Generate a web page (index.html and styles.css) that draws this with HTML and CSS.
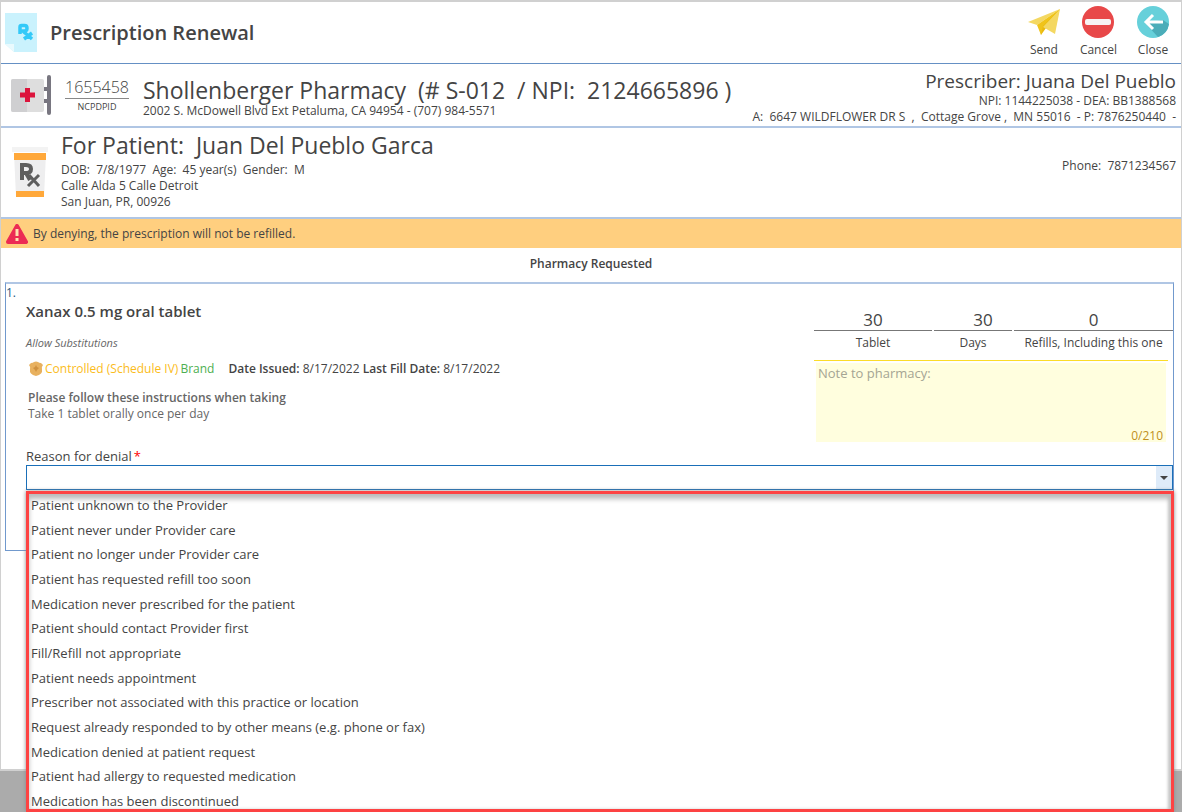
FILE: index.html
```html
<!DOCTYPE html>
<html lang="en">
<head>
    <meta charset="UTF-8">
    <title>Prescription Renewal</title>
    <link rel="stylesheet" href="styles.css">
</head>
<body>
    <div class="window">
        <header class="title-bar">
            <svg class="title-icon" width="32" height="39" viewBox="0 0 32 39">
                <path d="M0 0H32V39H9L0 31Z" fill="#caf2fd"/>
                <path d="M0 31H9V39Z" fill="#e9fafe"/>
                <path d="M15 21V14Q15 12.500 16.500 12.500H19.500Q22 12.500 22 15.200T19.500 18H15M18 18L20 20M19 19L27 26M27 20L19 26" fill="none" stroke="#33c9f8" stroke-width="3.500"/>
            </svg>
            <h1>Prescription Renewal</h1>
            <div class="actions">
                <button type="button">
                    <svg width="32" height="32" viewBox="0 0 32 32">
                        <path d="M0 16L32 3L9 19Z" fill="#f4d862"/>
                        <path d="M32 3L12 20L13 29L18 22Z" fill="#e9b90f"/>
                        <path d="M32 3L15 21L27 28Z" fill="#f4d862"/>
                        <path d="M32 3L9 19L13 29L15 20Z" fill="#f0c419"/>
                    </svg>
                    Send
                </button>
                <button type="button">
                    <svg width="32" height="32" viewBox="0 0 32 32">
                        <circle cx="16" cy="16" r="16" fill="#e84849"/>
                        <rect x="3" y="13" width="26" height="6" rx="2" fill="#f7f3f3"/>
                    </svg>
                    Cancel
                </button>
                <button type="button">
                    <svg width="32" height="32" viewBox="0 0 32 32">
                        <circle cx="16" cy="16" r="16" fill="#66d0da"/>
                        <path d="M8 17L21 31A16 16 0 0 0 32 18L26 14Z" fill="#4badb9"/>
                        <path d="M26 16H9M16 9L9 16L16 23" fill="none" stroke="#fff" stroke-width="3"/>
                    </svg>
                    Close
                </button>
            </div>
        </header>

        <section class="pharmacy">
            <svg class="pharmacy-icon" width="40" height="40" viewBox="0 0 40 40">
                <path d="M32 14H38M32 26H38" stroke="#787680" stroke-width="4"/>
                <rect x="36" y="0" width="4" height="40" rx="2" fill="#787680"/>
                <rect x="0" y="4" width="33" height="33" rx="2" fill="#dedede"/>
                <path d="M2 4H16V37H2Q0 37 0 35V6Q0 4 2 4Z" fill="#cfcfd1"/>
                <path d="M16.500 13V27M9 20H24" stroke="#dc143c" stroke-width="5"/>
            </svg>
            <div class="ncpdpid">
                <span class="ncpdpid-value">1655458</span>
                <span class="ncpdpid-label">NCPDPID</span>
            </div>
            <div class="pharmacy-info">
                <h2>Shollenberger Pharmacy &nbsp;(# S-012 &nbsp;/ NPI: &nbsp;2124665896 )</h2>
                <p>2002 S. McDowell Blvd Ext Petaluma, CA 94954 - (707) 984-5571</p>
            </div>
            <div class="prescriber">
                <h3>Prescriber: Juana Del Pueblo</h3>
                <p>NPI: 1144225038 - DEA: BB1388568</p>
                <p>A: &nbsp;6647 WILDFLOWER DR S &nbsp;, &nbsp;Cottage Grove , &nbsp;MN 55016 &nbsp;- P: 7876250440 &nbsp;-</p>
            </div>
        </section>

        <section class="patient">
            <svg class="patient-icon" width="36" height="51" viewBox="0 0 36 51">
                <rect x="0" y="0" width="36" height="5" fill="#f3f3f3"/>
                <path d="M2 6H34L32 50H4Z" fill="#eeeeef"/>
                <path d="M2 6H34V13H2ZM4 44H32V50H4Z" fill="#ffa83a"/>
                <path d="M10 33V18H14Q19 18 19 22T14 26H10M14 26L18 33" fill="none" stroke="#5e5e5e" stroke-width="4"/>
                <path d="M17 28L27 39M27 28L16 39" fill="none" stroke="#5e5e5e" stroke-width="3"/>
            </svg>
            <div class="patient-info">
                <h2>For Patient: &nbsp;Juan Del Pueblo Garca</h2>
                <p>DOB: &nbsp;7/8/1977 &nbsp;Age: &nbsp;45 year(s) &nbsp;Gender: &nbsp;M</p>
                <p>Calle Alda 5 Calle Detroit</p>
                <p>San Juan, PR, 00926</p>
            </div>
            <p class="phone">Phone: &nbsp;7871234567</p>
        </section>

        <div class="alert">
            <svg width="22" height="20" viewBox="0 0 22 20">
                <path d="M11 2L20 18H2Z" fill="#ec2b54" stroke="#ec2b54" stroke-width="4" stroke-linejoin="round"/>
                <path d="M11 5V12M11 14V17" stroke="#ffe0b0" stroke-width="3"/>
            </svg>
            By denying, the prescription will not be refilled.
        </div>

        <h4 class="section-title">Pharmacy Requested</h4>

        <section class="card">
            <span class="card-number">1.</span>
            <div class="card-body">
                <div class="medication">
                    <h3>Xanax 0.5 mg oral tablet</h3>
                    <p class="substitutions">Allow Substitutions</p>
                    <div class="details">
                        <svg width="14" height="16" viewBox="0 0 14 16">
                            <path d="M2 2Q4 2 5 1Q7 0 9 1Q10 2 12 2L14 4Q12 6 13 9Q14 13 7 15Q0 13 1 9Q2 6 0 4Z" fill="#e8b15f"/>
                            <path d="M7 4L8 6L10 7L8 9L7 11L6 9L4 7L6 6Z" fill="#cf913f"/>
                        </svg>
                        <span class="controlled">Controlled (Schedule IV)</span>
                        <span class="brand">Brand</span>
                        <span class="dates"><b>Date Issued:</b> 8/17/2022 <b>Last Fill Date:</b> 8/17/2022</span>
                    </div>
                    <div class="instructions">
                        <b>Please follow these instructions when taking</b>
                        <p>Take 1 tablet orally once per day</p>
                    </div>
                </div>
                <div class="dispense">
                    <div class="quantities">
                        <div class="quantity tablet"><span>30</span><small>Tablet</small></div>
                        <div class="quantity days"><span>30</span><small>Days</small></div>
                        <div class="quantity refills"><span>0</span><small>Refills, Including this one</small></div>
                    </div>
                    <div class="note">
                        <textarea placeholder="Note to pharmacy:" aria-label="Note to pharmacy" maxlength="210"></textarea>
                        <span class="counter">0/210</span>
                    </div>
                </div>
            </div>
            <div class="denial">
                <label for="reason">Reason for denial<span class="required">*</span></label>
                <div class="dropdown">
                    <select id="reason" required>
                        <option value=""></option>
                    </select>
                    <svg class="arrow" width="16" height="23" viewBox="0 0 16 23">
                        <rect width="16" height="23" fill="#deebf9"/>
                        <path d="M4 10H12L8 14Z" fill="#444"/>
                    </svg>
                    <ul class="options" role="listbox" aria-label="Reason for denial">
                        <li role="option">Patient unknown to the Provider</li>
                        <li role="option">Patient never under Provider care</li>
                        <li role="option">Patient no longer under Provider care</li>
                        <li role="option">Patient has requested refill too soon</li>
                        <li role="option">Medication never prescribed for the patient</li>
                        <li role="option">Patient should contact Provider first</li>
                        <li role="option">Fill/Refill not appropriate</li>
                        <li role="option">Patient needs appointment</li>
                        <li role="option">Prescriber not associated with this practice or location</li>
                        <li role="option">Request already responded to by other means (e.g. phone or fax)</li>
                        <li role="option">Medication denied at patient request</li>
                        <li role="option">Patient had allergy to requested medication</li>
                        <li role="option">Medication has been discontinued</li>
                    </ul>
                </div>
            </div>
        </section>
    </div>
</body>
</html>
```
FILE: styles.css
```css
:root {
    --text-color: #444;
    --line-color: #b0c6e4;
    --accent-color: #1a6fb8;
}

* {
    box-sizing: border-box;
    margin: 0;
    padding: 0;
}

body {
    display: flex;
    flex-direction: column;
    min-height: 100vh;
    padding-bottom: 41px;
    font-family: "Segoe UI", "Open Sans", "Noto Sans", sans-serif;
    font-size: 12px;
    line-height: 16px;
    color: var(--text-color);
    background-color: #ababab;
}

h1, h2, h3, h4 {
    font-weight: 400;
}

svg {
    display: block;
    flex-shrink: 0;
}

.window {
    flex: 1;
    background-color: white;
    border: 1px solid #d0d0d0;
    border-width: 2px 1px;
}

.title-bar {
    display: flex;
    align-items: center;
    height: 62px;
    padding: 0 12px 0 4px;
    border-bottom: 1px solid #6590c4;
}

.title-bar h1 {
    margin-left: 13px;
    font-size: 20px;
    line-height: 28px;
    font-weight: 600;
}

.actions {
    display: flex;
    gap: 20px;
    margin-left: auto;
}

.actions button {
    display: flex;
    flex-direction: column;
    align-items: center;
    gap: 4px;
    padding-bottom: 2px;
    border: none;
    background: none;
    font: inherit;
    color: inherit;
    cursor: pointer;
}

.pharmacy {
    display: flex;
    align-items: center;
    height: 64px;
    padding: 0 5px 0 10px;
    border-bottom: 2px solid var(--line-color);
}

.ncpdpid {
    display: flex;
    flex-direction: column;
    width: 64px;
    margin-left: 14px;
    text-align: center;
}

.ncpdpid-value {
    font-size: 16px;
    line-height: 22px;
    font-weight: 300;
    border-bottom: 1px solid #888;
}

.ncpdpid-label {
    font-size: 9px;
}

.pharmacy-info {
    margin-left: 14px;
    padding-top: 6px;
}

.pharmacy h2, .patient h2 {
    font-size: 23px;
    line-height: 26px;
}

.prescriber {
    margin-left: auto;
    padding-top: 4px;
    text-align: right;
}

.prescriber h3 {
    font-size: 19px;
    line-height: 24px;
}

.patient {
    display: flex;
    align-items: center;
    height: 91px;
    padding: 0 5px 0 11px;
    border-bottom: 2px solid var(--line-color);
}

.patient-info {
    margin-left: 13px;
    padding-bottom: 4px;
}

.patient h2 {
    padding-bottom: 4px;
}

.phone {
    margin-left: auto;
    padding-bottom: 14px;
}

.alert {
    display: flex;
    align-items: center;
    gap: 5px;
    height: 29px;
    padding-left: 5px;
    background-color: #ffcf7f;
}

.section-title {
    padding: 8px 0 10px;
    font-weight: 600;
    text-align: center;
}

.card {
    height: 269px;
    margin: 0 7px 0 4px;
    padding-top: 1px;
    border: 1px solid #7199cd;
    border-top: 2px solid var(--line-color);
}

.card-number {
    display: block;
    color: #2a5a80;
}

.card-body {
    display: flex;
    justify-content: space-between;
    height: 147px;
    padding-left: 20px;
}

.medication h3 {
    font-size: 15px;
    line-height: 20px;
    font-weight: 600;
}

.substitutions {
    margin-top: 14px;
    font-size: 11px;
    font-style: italic;
    color: #666;
}

.details {
    display: flex;
    align-items: center;
    gap: 2px;
    margin: 10px 0 13px 3px;
}

.controlled {
    color: #fbbc1b;
}

.brand {
    color: #4caf50;
}

.dates {
    margin-left: 12px;
}

.dates b, .instructions b {
    font-weight: 600;
}

.instructions {
    margin-left: 2px;
    color: #666;
}

.dispense {
    width: 359px;
}

.quantities {
    display: flex;
    gap: 2px;
    padding-top: 8px;
}

.quantity {
    text-align: center;
}

.quantity span {
    display: block;
    border-bottom: 1px solid #777;
    font-size: 17px;
    line-height: 21px;
}

.quantity small {
    display: block;
    padding-top: 4px;
    font-size: 12px;
}

.tablet {
    width: 118px;
}

.days {
    width: 78px;
}

.days span {
    padding-left: 20px;
}

.refills {
    flex: 1;
}

.note {
    display: flex;
    flex-direction: column;
    width: 354px;
    margin-top: 9px;
    padding: 2px 2px 0;
    border-top: 1px solid #fbdc28;
}

.note textarea {
    display: block;
    width: 100%;
    height: 67px;
    padding: 2px;
    border: none;
    resize: none;
    background-color: #fffede;
    font: inherit;
    font-size: 13px;
}

.note textarea::placeholder {
    color: #a5a593;
}

.counter {
    padding-right: 3px;
    background-color: #fffede;
    color: #c09020;
    line-height: 12px;
    text-align: right;
}

.denial {
    padding-left: 20px;
}

.denial label {
    display: block;
    font-size: 13px;
    line-height: 17px;
}

.required {
    padding-left: 2px;
    color: red;
}

.dropdown {
    position: relative;
}

.dropdown select {
    display: block;
    width: 100%;
    height: 25px;
    border: 1px solid var(--accent-color);
    background-color: white;
    appearance: none;
    font: inherit;
}

.arrow {
    position: absolute;
    top: 1px;
    right: 1px;
    pointer-events: none;
}

/* open list, lies over the card and the page below it */
.options {
    position: absolute;
    top: 26px;
    left: 0;
    right: -1px;
    display: flex;
    flex-direction: column;
    justify-content: space-between;
    height: 321px;
    padding: 4px 0 1px 2px;
    border: 3px solid #fd4343;
    background-color: white;
    box-shadow: inset 0 5px 5px #bbb, inset -3px 0 3px #ccc, 0 0 4px #888;
    list-style: none;
    font-size: 13px;
    line-height: 14px;
}
```
